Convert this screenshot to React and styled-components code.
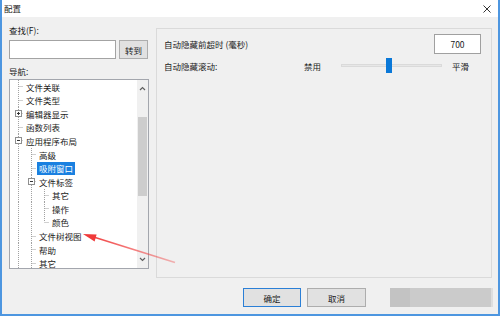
import React from "react";
import styled, { createGlobalStyle } from "styled-components";

const GlobalStyle = createGlobalStyle`
  html, body {
    margin: 0;
    padding: 0;
  }
  body {
    font-family: "Noto Sans CJK SC", "Noto Sans", sans-serif;
    font-size: 8.5px;
    color: #1a1a1a;
    background: #f0f0f0;
  }
`;

// tree geometry (px from the inner left edge of the tree box)
const ROW_H = 13.6;
const LINE_X = [8.5, 21.5, 34.5];
const TEXT_X = [16, 29, 42];
const MID = 6.5;

const TREE = [
  { label: "文件关联", level: 1 },
  { label: "文件类型", level: 1 },
  { label: "编辑器显示", level: 1, toggle: "plus" },
  { label: "函数列表", level: 1 },
  { label: "应用程序布局", level: 1, toggle: "minus" },
  { label: "高级", level: 2 },
  { label: "吸附窗口", level: 2, selected: true },
  { label: "文件标签", level: 2, toggle: "minus" },
  { label: "其它", level: 3 },
  { label: "操作", level: 3 },
  { label: "颜色", level: 3, last: true },
  { label: "文件树视图", level: 2 },
  { label: "帮助", level: 2 },
  { label: "其它", level: 2 },
];

const Guides = ({ level, last, toggle }) => {
  const w = TEXT_X[level - 1] - 2;
  const own = LINE_X[level - 1];
  const dash = { stroke: "#a0a0a0", strokeWidth: 1, strokeDasharray: "1 1" };
  return (
    <GuideSvg width={w} height={ROW_H} viewBox={`0 0 ${w} ${ROW_H}`}>
      {LINE_X.slice(0, level - 1).map((x) => (
        <line key={x} x1={x} y1={0} x2={x} y2={ROW_H} {...dash} />
      ))}
      <line x1={own} y1={0} x2={own} y2={last ? MID : ROW_H} {...dash} />
      <line x1={own + 1} y1={MID} x2={w - 1} y2={MID} {...dash} />
      {toggle && (
        <g>
          <rect
            x={own - 3}
            y={MID - 3}
            width={6}
            height={6}
            fill="#fff"
            stroke="#8f8f8f"
            strokeWidth={1}
          />
          <line x1={own - 1.5} y1={MID} x2={own + 1.5} y2={MID} stroke="#333" />
          {toggle === "plus" && (
            <line x1={own} y1={MID - 1.5} x2={own} y2={MID + 1.5} stroke="#333" />
          )}
        </g>
      )}
    </GuideSvg>
  );
};

const Chevron = ({ up }) => (
  <svg width="7" height="5" viewBox="0 0 7 5">
    <polyline
      points={up ? "1,4 3.5,1.5 6,4" : "1,1 3.5,3.5 6,1"}
      fill="none"
      stroke="#606060"
      strokeWidth="1.2"
    />
  </svg>
);

export default function App() {
  return (
    <>
      <GlobalStyle />
      <Window>
        <TitleBar>
          <span>配置</span>
          <svg width="8" height="8" viewBox="0 0 8 8">
            <path d="M0.5 0.5 L7.5 7.5 M7.5 0.5 L0.5 7.5" stroke="#333" strokeWidth="1" />
          </svg>
        </TitleBar>

        <Body>
          <LeftCol>
            <FieldLabel>查找(F):</FieldLabel>
            <SearchRow>
              <SearchInput />
              <Button $width={29}>转到</Button>
            </SearchRow>
            <FieldLabel $gap={6}>导航:</FieldLabel>
            <TreeBox>
              <TreeRows>
                {TREE.map((item, i) => (
                  <TreeRow key={i}>
                    <Guides level={item.level} last={item.last} toggle={item.toggle} />
                    <TreeLabel $selected={item.selected}>{item.label}</TreeLabel>
                  </TreeRow>
                ))}
              </TreeRows>
              <ScrollBar>
                <ScrollArrow>
                  <Chevron up />
                </ScrollArrow>
                <ScrollTrack>
                  <ScrollThumb />
                </ScrollTrack>
                <ScrollArrow>
                  <Chevron />
                </ScrollArrow>
              </ScrollBar>
            </TreeBox>
          </LeftCol>

          <GroupBox>
            <SettingRow>
              <span>自动隐藏前超时 (毫秒)</span>
              <ValueBox>700</ValueBox>
            </SettingRow>
            <SliderRow>
              <SliderLabel $width={140}>自动隐藏滚动:</SliderLabel>
              <SliderLabel $width={37}>禁用</SliderLabel>
              <Slider>
                <Track />
                <Thumb />
              </Slider>
              <SliderLabel>平滑</SliderLabel>
            </SliderRow>
          </GroupBox>
        </Body>

        <Footer>
          <Button $width={58} $primary>
            确定
          </Button>
          <Button $width={59}>取消</Button>
          <Blurred>
            <BlurSeg $width={20} $tone="#c3c3c3" />
            <BlurSeg $grow $tone="#cbcbcb" />
            <BlurSeg $width={2} $tone="#dedede" />
          </Blurred>
        </Footer>

        <ArrowLayer width="500" height="316" viewBox="0 0 500 316">
          <defs>
            <linearGradient id="fade" gradientUnits="userSpaceOnUse" x1="86" y1="235" x2="175" y2="262">
              <stop offset="0" stopColor="#f03a3a" stopOpacity="1" />
              <stop offset="1" stopColor="#f03a3a" stopOpacity="0.35" />
            </linearGradient>
          </defs>
          <line x1="92" y1="236.5" x2="175" y2="262.5" stroke="url(#fade)" strokeWidth="1.6" />
          <polygon points="83,234 94.6,241.4 96.6,234.6" fill="#f03a3a" />
        </ArrowLayer>
      </Window>
    </>
  );
}

const Window = styled.div`
  position: relative;
  width: 500px;
  height: 316px;
  box-sizing: border-box;
  border: 2px solid #4d96e0;
  border-top: none;
  background: #f0f0f0;
  display: flex;
  flex-direction: column;
  overflow: hidden;
`;

const TitleBar = styled.div`
  flex: none;
  height: 17px;
  background: #fff;
  display: flex;
  align-items: center;
  justify-content: space-between;
  padding: 0 7px 0 2px;
  line-height: 17px;
`;

const Body = styled.div`
  flex: none;
  height: 263px;
  display: flex;
  align-items: flex-start;
  padding: 0 6px 0 7px;
`;

const LeftCol = styled.div`
  width: 140px;
  padding-top: 7px;
  display: flex;
  flex-direction: column;
`;

const FieldLabel = styled.div`
  height: 13px;
  line-height: 13px;
  margin-top: ${({ $gap }) => $gap || 0}px;
`;

const SearchRow = styled.div`
  display: flex;
  gap: 3px;
  margin-top: 3px;
`;

const SearchInput = styled.div`
  width: 107px;
  height: 19px;
  box-sizing: border-box;
  border: 1px solid #a3a3a3;
  background: #fff;
`;

const Button = styled.div`
  width: ${({ $width }) => $width}px;
  height: ${({ $height }) => $height || 19}px;
  box-sizing: border-box;
  border: 1px solid ${({ $primary }) => ($primary ? "#2b7fd6" : "#adadad")};
  background: #e1e1e1;
  display: flex;
  align-items: center;
  justify-content: center;
`;

const TreeBox = styled.div`
  margin-top: 1px;
  width: 140px;
  height: 190px;
  box-sizing: border-box;
  border: 1px solid #a3a6ad;
  background: #fff;
  display: flex;
`;

const TreeRows = styled.div`
  flex: 1;
  overflow: hidden;
`;

const TreeRow = styled.div`
  height: ${ROW_H}px;
  display: flex;
  align-items: center;
`;

const GuideSvg = styled.svg`
  flex: none;
  display: block;
`;

const TreeLabel = styled.span`
  padding: 0 2px;
  height: 12.5px;
  line-height: 12.5px;
  white-space: nowrap;
  background: ${({ $selected }) => ($selected ? "#1a80e0" : "transparent")};
  color: ${({ $selected }) => ($selected ? "#fff" : "inherit")};
`;

const ScrollBar = styled.div`
  width: 11px;
  flex: none;
  background: #f0f0f0;
  display: flex;
  flex-direction: column;
`;

const ScrollArrow = styled.div`
  height: 17px;
  flex: none;
  display: flex;
  align-items: center;
  justify-content: center;
`;

const ScrollTrack = styled.div`
  flex: 1;
  padding: 20px 1px 0;
`;

const ScrollThumb = styled.div`
  height: 79px;
  background: #cdcdcd;
`;

const GroupBox = styled.div`
  margin: 11px 0 0 7px;
  width: 336px;
  height: 250px;
  box-sizing: border-box;
  border: 1px solid #dadada;
  padding: 5px 10px 0 7px;
`;

const SettingRow = styled.div`
  display: flex;
  align-items: center;
  justify-content: space-between;
  height: 20px;
`;

const ValueBox = styled.div`
  width: 47px;
  height: 20px;
  box-sizing: border-box;
  border: 1px solid #a0a0a0;
  background: #fff;
  display: flex;
  align-items: center;
  justify-content: center;
`;

const SliderRow = styled.div`
  display: flex;
  align-items: center;
  height: 15px;
  margin-top: 4px;
`;

const SliderLabel = styled.span`
  flex: none;
  width: ${({ $width }) => ($width ? `${$width}px` : "auto")};
`;

const Slider = styled.div`
  position: relative;
  width: 101px;
  height: 15px;
  margin-right: 10px;
  display: flex;
  align-items: center;
`;

const Track = styled.div`
  width: 100%;
  height: 3px;
  background: #e7e7e7;
  border: 1px solid #dadada;
  box-sizing: border-box;
`;

const Thumb = styled.div`
  position: absolute;
  left: 45px;
  top: 0;
  width: 6px;
  height: 15px;
  background: #0a78d8;
`;

const Footer = styled.div`
  flex: 1;
  display: flex;
  justify-content: flex-end;
  align-items: flex-start;
  padding: 8px 5px 0 0;
  gap: 6px;
`;

const Blurred = styled.div`
  margin-left: 18px;
  width: 103px;
  height: 19px;
  display: flex;
`;

const BlurSeg = styled.div`
  flex: ${({ $grow }) => ($grow ? 1 : "none")};
  width: ${({ $width }) => ($width ? `${$width}px` : "auto")};
  background: ${({ $tone }) => $tone};
`;

const ArrowLayer = styled.svg`
  position: absolute;
  left: -2px;
  top: 0;
  pointer-events: none;
`;
